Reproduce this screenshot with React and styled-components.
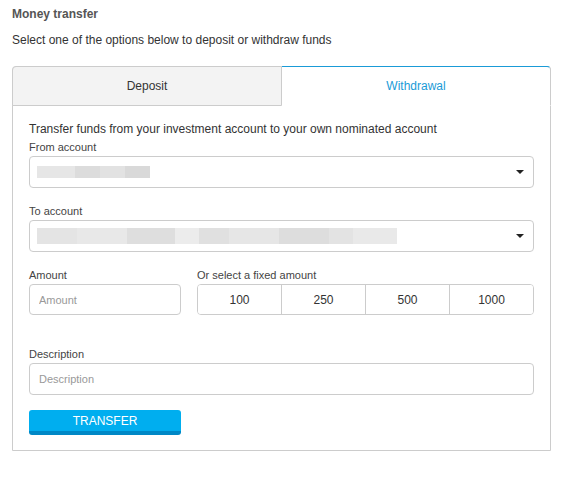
import React from "react";
import styled, { createGlobalStyle } from "styled-components";

const Global = createGlobalStyle`
  html, body { margin: 0; padding: 0; background: #fff; }
  body { font-family: "Liberation Sans", Arial, sans-serif; color: #333; }
  * { box-sizing: border-box; }
`;

const Page = styled.div`
  padding: 6px 12px 20px;
  width: 575px;
`;

const Title = styled.h1`
  margin: 0;
  font-size: 12px;
  line-height: 16px;
  font-weight: bold;
  color: #555;
`;

const Subtitle = styled.p`
  margin: 10px 0 0;
  font-size: 12px;
  line-height: 16px;
  color: #333;
`;

const Panel = styled.div`
  margin-top: 18px;
  width: 539px;
  border: 1px solid #ccc;
  border-radius: 4px 4px 0 0;
`;

const TabRow = styled.div`
  display: grid;
  grid-template-columns: 270px 1fr;
  margin: -1px -1px 0;
  height: 40px;
`;

const Tab = styled.div`
  display: flex;
  align-items: center;
  justify-content: center;
  font-size: 12px;
  color: ${(p) => (p.$active ? "#1a9bd7" : "#333")};
  background: ${(p) => (p.$active ? "#fff" : "#f3f3f3")};
  border: 1px solid #ccc;
  border-top-color: ${(p) => (p.$active ? "#1a9bd7" : "#ccc")};
  border-bottom-color: ${(p) => (p.$active ? "transparent" : "#ccc")};
  border-left-width: ${(p) => (p.$active ? "0" : "1px")};
  border-radius: ${(p) => (p.$active ? "0 4px 0 0" : "4px 0 0 0")};
`;

const Body = styled.div`
  padding: 15px 16px 15px;
  display: flex;
  flex-direction: column;
`;

const Intro = styled.div`
  font-size: 12px;
  line-height: 16px;
  color: #333;
`;

const Field = styled.div`
  display: flex;
  flex-direction: column;
  margin-top: ${(p) => p.$mt || 0}px;
`;

const Label = styled.label`
  font-size: 11px;
  line-height: 14px;
  color: #444;
  margin-bottom: 2px;
`;

const SelectBox = styled.div`
  position: relative;
  height: 32px;
  border: 1px solid #ccc;
  border-radius: 4px;
  display: flex;
  align-items: center;
  padding-left: 7px;
`;

const Caret = styled.span`
  position: absolute;
  right: 9px;
  top: 13px;
  width: 0;
  height: 0;
  border-left: 4px solid transparent;
  border-right: 4px solid transparent;
  border-top: 4px solid #222;
`;

const Redacted = styled.div`
  display: flex;
  height: ${(p) => p.$h}px;
`;

const Chunk = styled.span`
  display: block;
  height: 100%;
  background: ${(p) => p.$c};
`;

const Input = styled.input`
  height: ${(p) => p.$h || 32}px;
  width: 100%;
  border: 1px solid #ccc;
  border-radius: 4px;
  padding: 0 9px;
  font-family: "Liberation Sans", Arial, sans-serif;
  font-size: 11px;
  color: #333;
  outline: none;
  &::placeholder { color: #999; }
`;

const AmountRow = styled.div`
  display: grid;
  grid-template-columns: 152px 337px;
  column-gap: 16px;
  margin-top: 16px;
`;

const ButtonGroup = styled.div`
  display: flex;
  height: 31px;
  border: 1px solid #ccc;
  border-radius: 4px;
  overflow: hidden;
`;

const GroupButton = styled.button`
  flex: 1;
  border: 0;
  border-left: ${(p) => (p.$first ? "0" : "1px solid #ccc")};
  background: #fff;
  font-family: "Liberation Sans", Arial, sans-serif;
  font-size: 12px;
  color: #333;
  padding: 0;
  cursor: pointer;
`;

const SubmitButton = styled.button`
  margin-top: 15px;
  width: 152px;
  height: 25px;
  border: 0;
  border-bottom: 4px solid #0088c6;
  border-radius: 3px;
  background: #00aeef;
  color: #fff;
  font-family: "Liberation Sans", Arial, sans-serif;
  font-size: 12px;
  line-height: 23px;
  padding: 0;
  cursor: pointer;
`;

const fromChunks = [
  [38, "#e6e6e6"], [25, "#dcdcdc"], [25, "#e2e2e2"], [25, "#d9d9d9"],
];
const toChunks = [
  [40, "#e4e4e4"], [50, "#e8e8e8"], [48, "#dedede"], [24, "#ececec"],
  [30, "#e0e0e0"], [50, "#e6e6e6"], [50, "#dddddd"], [24, "#e3e3e3"],
  [44, "#e9e9e9"],
];

function Blur({ chunks, h }) {
  return (
    <Redacted $h={h}>
      {chunks.map(([w, c], i) => (
        <Chunk key={i} $c={c} style={{ width: w }} />
      ))}
    </Redacted>
  );
}

export default function App() {
  return (
    <>
      <Global />
      <Page>
        <Title>Money transfer</Title>
        <Subtitle>Select one of the options below to deposit or withdraw funds</Subtitle>
        <Panel>
          <TabRow>
            <Tab>Deposit</Tab>
            <Tab $active>Withdrawal</Tab>
          </TabRow>
          <Body>
            <Intro>Transfer funds from your investment account to your own nominated account</Intro>
            <Field $mt={3}>
              <Label>From account</Label>
              <SelectBox>
                <Blur chunks={fromChunks} h={12} />
                <Caret />
              </SelectBox>
            </Field>
            <Field $mt={16}>
              <Label>To account</Label>
              <SelectBox>
                <Blur chunks={toChunks} h={16} />
                <Caret />
              </SelectBox>
            </Field>
            <AmountRow>
              <Field>
                <Label>Amount</Label>
                <Input $h={31} placeholder="Amount" />
              </Field>
              <Field>
                <Label>Or select a fixed amount</Label>
                <ButtonGroup>
                  {["100", "250", "500", "1000"].map((v, i) => (
                    <GroupButton key={v} $first={i === 0}>{v}</GroupButton>
                  ))}
                </ButtonGroup>
              </Field>
            </AmountRow>
            <Field $mt={32}>
              <Label>Description</Label>
              <Input placeholder="Description" />
            </Field>
            <SubmitButton>TRANSFER</SubmitButton>
          </Body>
        </Panel>
      </Page>
    </>
  );
}
